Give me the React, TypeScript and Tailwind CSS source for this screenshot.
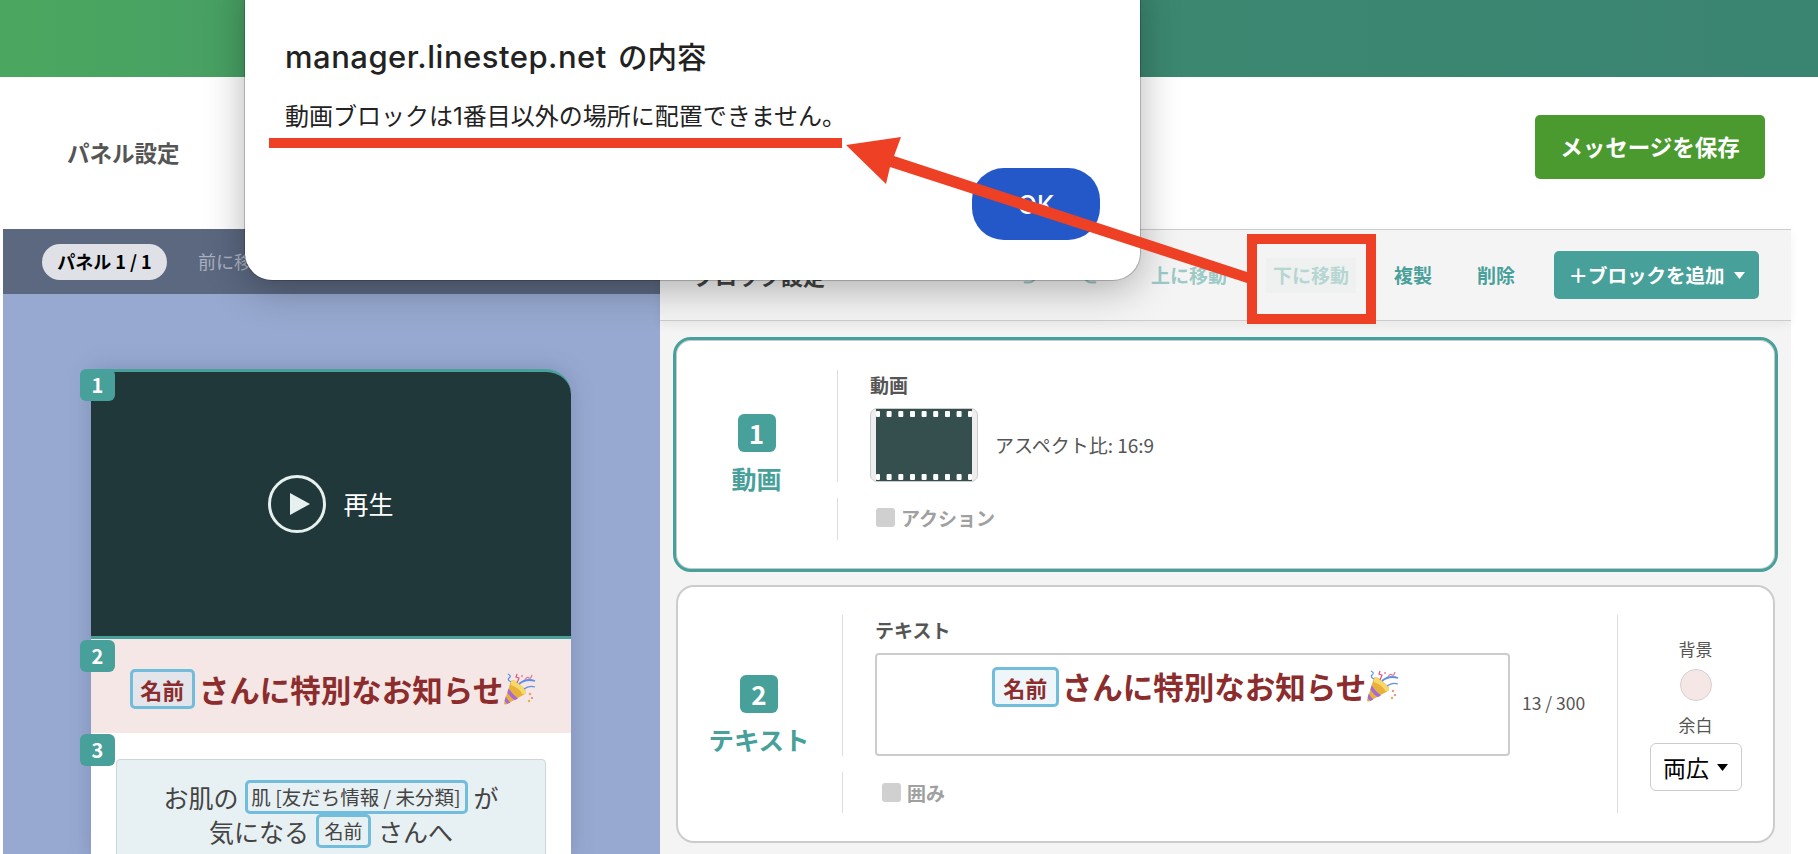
import { Undo2, Redo2 } from 'lucide-react';

function Tag({ children, className }: { children: React.ReactNode; className: string }) {
  return (
    <span className={`inline-flex items-center justify-center whitespace-nowrap rounded-[5px] border-[3px] border-[#72bcdc] ${className}`}>
      {children}
    </span>
  );
}

function Popper() {
  return (
    <svg width="33" height="32" viewBox="0 0 33 32" className="shrink-0">
      <path d="M1 30 L8 8 Q10 6 14 9 L22 16 Q24 19 22 21 L3 31.5 Q1 32 1 30 Z" fill="#e8b23a" />
      <path d="M8 8 Q10 6 14 9 L22 16 Q24 19 22 21 L19 21 Q18 16 8 12 Z" fill="#f8d86a" />
      <path d="M5.6 15.5 Q10 22 15 25.4 L11.6 27.2 Q7 24 4.4 19.4 Z" fill="#a66ad8" />
      <path d="M2.8 23.6 Q4.4 27 7.4 29.4 L4.4 31 Q2.4 29.4 1.6 27.4 Z" fill="#a66ad8" />
      <path d="M16 11 Q23 5 32 8" stroke="#5b8fe8" strokeWidth="1.8" fill="none" />
      <path d="M21 16 Q26 12 32 14" stroke="#5b8fe8" strokeWidth="1.2" fill="none" />
      <path d="M5 1 Q9 3 6 5 Q4 7 8 9" stroke="#5b8fe8" strokeWidth="1.2" fill="none" />
      <path d="M14 1 L13 4 L16 5 L14 10" stroke="#e0567a" strokeWidth="1.2" fill="none" />
      <path d="M22 7 Q24 3 26 5 Q28 6 29 2" stroke="#e0789a" strokeWidth="1.2" fill="none" />
      <circle cx="27" cy="21" r="1.3" fill="#e8a27a" />
      <circle cx="29" cy="25" r="1.1" fill="#e0789a" />
      <circle cx="26" cy="28" r="1.2" fill="#e8b23a" />
      <circle cx="19" cy="3" r="0.9" fill="#e0789a" />
    </svg>
  );
}

function FilmThumb() {
  const holes = [10.6, 22.3, 34, 45.6, 57.2, 69, 80.6];
  return (
    <div className="flex h-[74px] w-[108px] items-center justify-center rounded-[7px] border border-[#cccccc] bg-[#eeeeee]">
      <svg width="96" height="72" viewBox="0 0 96 72">
        <rect width="96" height="72" fill="#354f4f" />
        {[2, 65].map((y) => (
          <g key={y} fill="#ffffff">
            <rect x="0" y={y} width="4" height="6" rx="1" />
            {holes.map((x) => (
              <rect key={x} x={x} y={y} width="5" height="6" rx="1" />
            ))}
            <rect x="92" y={y} width="4" height="6" rx="1" />
          </g>
        ))}
      </svg>
    </div>
  );
}

function Badge({ n }: { n: number }) {
  return (
    <div className="flex h-[38px] w-[38px] items-center justify-center rounded-[6px] bg-[#48a09a] text-[26px] font-bold leading-none text-white">
      {n}
    </div>
  );
}

function PhoneBadge({ n, className }: { n: number; className: string }) {
  return (
    <div className={`absolute left-[-11px] flex h-[32px] w-[35px] items-center justify-center rounded-[6px] bg-[#48a09a] text-[20px] font-bold text-white ${className}`}>
      {n}
    </div>
  );
}

function Check({ label }: { label: string }) {
  return (
    <div className="flex items-center gap-[6px] text-[19px] font-bold leading-none text-[#a0a0a0]">
      <span className="h-[19px] w-[19px] rounded-[3px] bg-[#d0d0d0]" />
      {label}
    </div>
  );
}

export default function App() {
  return (
    <div className="relative h-[854px] w-[1818px] overflow-hidden bg-white font-['Noto_Sans_CJK_JP','Noto_Sans',sans-serif]">
      {/* header */}
      <div className="h-[77px] bg-linear-to-r from-[#4ba75f] via-[#3c8870] via-60% to-[#3a8472]" />

      {/* panel / save row */}
      <div className="flex h-[152px] items-center justify-between pl-[67px] pr-[53px]">
        <div className="text-[22.5px] font-bold text-[#555555]">パネル設定</div>
        <button className="mb-[12px] h-[64px] w-[230px] rounded-[5px] bg-[#4b9a2f] text-[22.5px] font-bold text-white">
          メッセージを保存
        </button>
      </div>

      <div className="flex h-[625px] pl-[3px]">
        {/* left panel */}
        <div className="w-[657px] overflow-hidden bg-[#98a9d1]">
          <div className="flex h-[65px] items-center bg-[#5b6880] pl-[39px]">
            <div className="flex h-[36px] w-[125px] items-center justify-center rounded-full bg-[#dfe1e7] text-[18px] font-bold text-black">
              パネル 1 / 1
            </div>
            <div className="ml-[31px] text-[18px] text-[#a9b0bf]">前に移動</div>
          </div>

          <div className="relative ml-[88px] mt-[75px] w-[480px] rounded-tr-[25px] shadow-[0_0_22px_rgba(60,70,110,0.25)]">
            <PhoneBadge n={1} className="top-0" />
            <PhoneBadge n={2} className="top-[271px]" />
            <PhoneBadge n={3} className="top-[365px]" />

            <div className="flex h-[270px] items-center justify-center gap-[17px] rounded-tr-[25px] border-y-[3px] border-[#48a09a] bg-[#20383a]">
              <div className="flex h-[58px] w-[58px] items-center justify-center rounded-full border-[3px] border-[#e6f0ef]">
                <svg width="20" height="22" viewBox="0 0 20 22" className="ml-[6px]">
                  <path d="M0 0 L20 11 L0 22 Z" fill="#e6f0ef" />
                </svg>
              </div>
              <div className="text-[25px] text-white">再生</div>
            </div>

            <div className="flex h-[94px] items-center justify-center gap-[4px] bg-[#f4e7e6] pl-[4px] pt-[6px] text-[#8c2c2c]">
              <Tag className="h-[40px] w-[65px] bg-[#e4e5ea] text-[22px] font-bold">名前</Tag>
              <div className="flex items-center">
                <span className="text-[30.5px] font-bold leading-none">さんに特別なお知らせ</span>
                <Popper />
              </div>
            </div>

            <div className="bg-white px-[25px] pt-[26px]">
              <div className="h-[100px] rounded-[4px] border border-[#cfd6d8] bg-[#e7f0f2] pt-[20px] text-[25px] leading-[34px] text-[#444444]">
                <div className="flex items-center justify-center gap-[6px]">
                  <span>お肌の</span>
                  <Tag className="h-[34px] w-[223px] text-[19.5px]">肌 [友だち情報 / 未分類]</Tag>
                  <span>が</span>
                </div>
                <div className="flex items-center justify-center gap-[7px]">
                  <span>気になる</span>
                  <Tag className="h-[34px] w-[55px] text-[19px]">名前</Tag>
                  <span>さんへ</span>
                </div>
              </div>
            </div>
          </div>
        </div>

        {/* right panel */}
        <div className="w-[1131px] bg-[#f4f4f4]">
          <div className="relative flex h-[92px] items-center border-y border-[#cccccc] pl-[33px] shadow-[0_4px_10px_rgba(0,0,0,0.05)]">
            <div className="w-[132px] text-[22px] font-bold text-[#444444]">ブロック設定</div>
            <Undo2 className="ml-[187px] mt-[-4px] h-[28px] w-[28px] text-[#9ccac6]" />
            <Redo2 className="ml-[40px] mt-[-4px] h-[28px] w-[28px] text-[#9ccac6]" />
            <div className="ml-[43px] text-[19px] font-bold text-[#9ccac6]">上に移動</div>
            <div className="ml-[39px] flex h-[35px] w-[90px] items-center justify-center bg-[#eff1f0] text-[19px] font-bold text-[#b5d6d2]">
              下に移動
            </div>
            <div className="ml-[38px] text-[19px] font-bold text-[#48a09a]">複製</div>
            <div className="ml-[45px] text-[19px] font-bold text-[#48a09a]">削除</div>
            <button className="ml-[39px] flex h-[48px] w-[205px] items-center justify-center gap-[9px] rounded-[5px] bg-[#48a09a] text-[19.5px] font-bold text-white">
              ＋ブロックを追加
              <svg width="11" height="7" viewBox="0 0 11 7">
                <path d="M0 0 H11 L5.5 7 Z" fill="#ffffff" />
              </svg>
            </button>
          </div>

          {/* block 1 */}
          <div className="ml-[13px] mt-[16px] flex h-[235px] w-[1105px] rounded-[18px] border-[3px] border-[#48a09a] bg-white shadow-[inset_0_0_0_1px_#c8c8c8]">
            <div className="flex w-[161px] flex-col items-center justify-center gap-[8px]">
              <Badge n={1} />
              <div className="text-[25px] font-bold leading-[36px] text-[#48a09a]">動画</div>
            </div>
            <div className="flex flex-col gap-[16px] pt-[30px]">
              <div className="h-[112px] border-l border-[#dddddd] pl-[32px]">
                <div className="text-[19px] font-bold leading-[30px] text-[#555555]">動画</div>
                <div className="mt-[8px] flex items-center gap-[17px]">
                  <FilmThumb />
                  <span className="text-[19px] text-[#555555]">アスペクト比: 16:9</span>
                </div>
              </div>
              <div className="flex h-[42px] items-center border-l border-[#dddddd] pb-[4px] pl-[38px]">
                <Check label="アクション" />
              </div>
            </div>
          </div>

          {/* block 2 */}
          <div className="ml-[16px] mt-[13px] flex h-[258px] w-[1099px] rounded-[18px] border-2 border-[#cccccc] bg-white">
            <div className="flex w-[164px] flex-col items-center justify-center gap-[8px] pr-[2px] pt-[4px]">
              <Badge n={2} />
              <div className="text-[25.5px] font-bold leading-[36px] text-[#48a09a]">テキスト</div>
            </div>
            <div className="flex w-[775px] flex-col gap-[16px] pt-[28px]">
              <div className="h-[141px] border-l border-[#dddddd] pl-[32px]">
                <div className="text-[19px] font-bold leading-[30px] text-[#555555]">テキスト</div>
                <div className="flex items-center gap-[12px]">
                  <div className="mt-[8px] flex h-[103px] w-[635px] items-start justify-center gap-[3px] rounded-[4px] border-2 border-[#cccccc] pl-[6px] pt-[12px] text-[#8c2c2c]">
                    <Tag className="h-[40px] w-[67px] bg-[#eff6fa] text-[22px] font-bold">名前</Tag>
                    <div className="flex items-center">
                      <span className="text-[30.5px] font-bold leading-[38px]">さんに特別なお知らせ</span>
                      <Popper />
                    </div>
                  </div>
                  <span className="pt-[6px] text-[17.5px] text-[#555555]">13 / 300</span>
                </div>
              </div>
              <div className="flex h-[41px] items-center border-l border-[#dddddd] pl-[39px]">
                <Check label="囲み" />
              </div>
            </div>
            <div className="mb-[28px] mt-[28px] flex flex-1 flex-col items-center border-l border-[#dddddd] pt-[20px] text-[#555555]">
              <div className="text-[17px] leading-[28px]">背景</div>
              <div className="mt-[6px] h-[32px] w-[32px] rounded-full border border-[#d8d0d0] bg-[#f4e7e6]" />
              <div className="mt-[10px] text-[17px] leading-[28px]">余白</div>
              <div className="mt-[4px] flex h-[48px] w-[92px] items-center justify-center gap-[8px] rounded-[6px] border border-[#cccccc] text-[23px] text-black">
                両広
                <svg width="11" height="7" viewBox="0 0 11 7">
                  <path d="M0 0 H11 L5.5 7 Z" fill="#000000" />
                </svg>
              </div>
            </div>
          </div>
        </div>
      </div>

      {/* browser alert */}
      <div className="absolute left-[245px] top-[-30px] flex h-[310px] w-[895px] flex-col rounded-[27px] bg-white pl-[40px] pr-[40px] pt-[67px] shadow-[0_8px_40px_rgba(0,0,0,0.3),0_0_0_1px_rgba(0,0,0,0.2)]">
        <div className="flex h-[40px] items-baseline gap-[11px] font-['Inter','Noto_Sans_CJK_JP',sans-serif] font-medium leading-[40px] text-[#222222]">
          <span className="text-[31px] tracking-[0.5px]">manager.linestep.net</span>
          <span className="text-[29.5px]">の内容</span>
        </div>
        <div className="mt-[23px] font-['Inter','Noto_Sans_CJK_JP',sans-serif] text-[24px] leading-[34px] text-[#222222]">
          動画ブロックは1番目以外の場所に配置できません。
        </div>
        <div className="mt-[34px] flex justify-end">
          <button className="h-[72px] w-[128px] rounded-[32px] bg-[#2458c8] pt-[3px] font-['Inter',sans-serif] text-[25px] font-medium text-white">
            OK
          </button>
        </div>
      </div>

      {/* red annotation */}
      <svg className="pointer-events-none absolute inset-0" width="1818" height="854" viewBox="0 0 1818 854">
        <rect x="269" y="138" width="573" height="10" fill="#ee4025" />
        <path d="M846 145 L901 137 L894 156 L1247 272 V283 L890 167 L886 184 Z" fill="#ee4025" />
        <rect x="1252" y="239" width="119" height="80" fill="none" stroke="#ee4025" strokeWidth="10" />
      </svg>
    </div>
  );
}
